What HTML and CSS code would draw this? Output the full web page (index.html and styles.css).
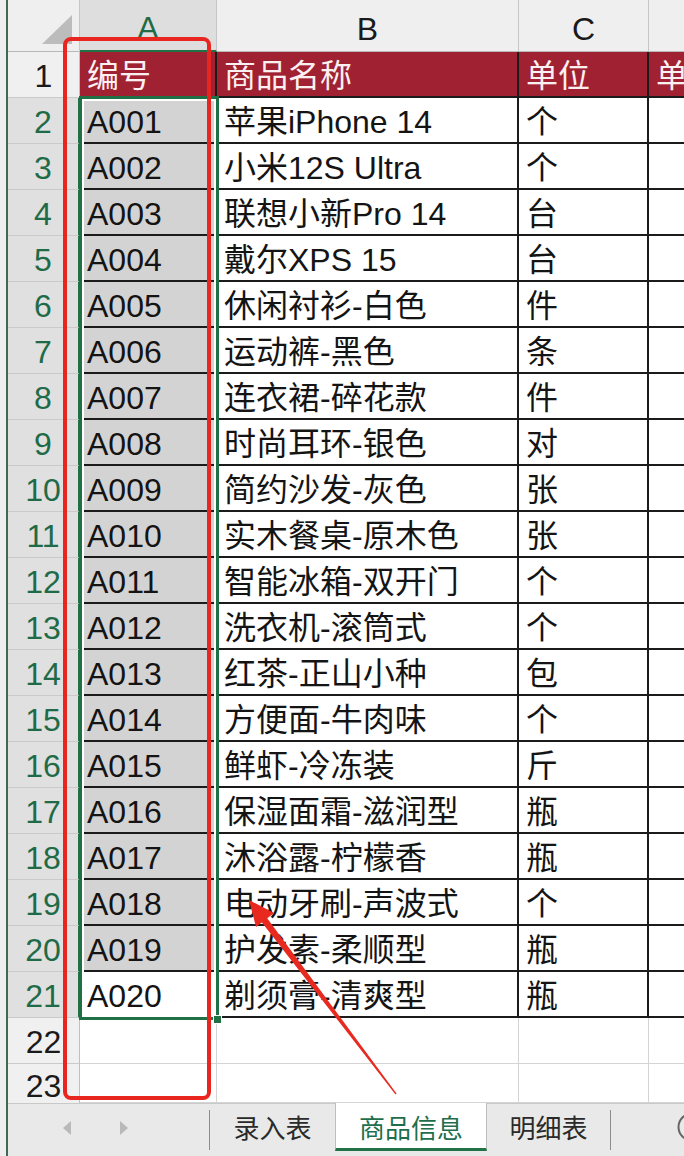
FILE: index.html
```html
<!DOCTYPE html>
<html lang="zh-CN">
<head>
<meta charset="utf-8">
<title>商品信息</title>
<link rel="stylesheet" href="styles.css">
</head>
<body>
<div class="app">
  <div class="edge"></div>
  <div class="main">
    <div class="grid">
      <div class="corner"><svg width="30" height="29" viewBox="0 0 30 29"><polygon points="30,0 30,29 0,29" fill="#bcbcbc"/></svg></div>
      <div class="ch sel">A</div>
      <div class="ch">B</div>
      <div class="ch">C</div>
      <div class="ch"></div>

      <div class="rh">1</div>
      <div class="c hd">编号</div><div class="c hd">商品名称</div><div class="c hd">单位</div><div class="c hd">单价</div>

      <div class="rh sel">2</div><div class="c g">A001</div><div class="c">苹果iPhone 14</div><div class="c">个</div><div class="c"></div>
      <div class="rh sel">3</div><div class="c g">A002</div><div class="c">小米12S Ultra</div><div class="c">个</div><div class="c"></div>
      <div class="rh sel">4</div><div class="c g">A003</div><div class="c">联想小新Pro 14</div><div class="c">台</div><div class="c"></div>
      <div class="rh sel">5</div><div class="c g">A004</div><div class="c">戴尔XPS 15</div><div class="c">台</div><div class="c"></div>
      <div class="rh sel">6</div><div class="c g">A005</div><div class="c">休闲衬衫-白色</div><div class="c">件</div><div class="c"></div>
      <div class="rh sel">7</div><div class="c g">A006</div><div class="c">运动裤-黑色</div><div class="c">条</div><div class="c"></div>
      <div class="rh sel">8</div><div class="c g">A007</div><div class="c">连衣裙-碎花款</div><div class="c">件</div><div class="c"></div>
      <div class="rh sel">9</div><div class="c g">A008</div><div class="c">时尚耳环-银色</div><div class="c">对</div><div class="c"></div>
      <div class="rh sel">10</div><div class="c g">A009</div><div class="c">简约沙发-灰色</div><div class="c">张</div><div class="c"></div>
      <div class="rh sel">11</div><div class="c g">A010</div><div class="c">实木餐桌-原木色</div><div class="c">张</div><div class="c"></div>
      <div class="rh sel">12</div><div class="c g">A011</div><div class="c">智能冰箱-双开门</div><div class="c">个</div><div class="c"></div>
      <div class="rh sel">13</div><div class="c g">A012</div><div class="c">洗衣机-滚筒式</div><div class="c">个</div><div class="c"></div>
      <div class="rh sel">14</div><div class="c g">A013</div><div class="c">红茶-正山小种</div><div class="c">包</div><div class="c"></div>
      <div class="rh sel">15</div><div class="c g">A014</div><div class="c">方便面-牛肉味</div><div class="c">个</div><div class="c"></div>
      <div class="rh sel">16</div><div class="c g">A015</div><div class="c">鲜虾-冷冻装</div><div class="c">斤</div><div class="c"></div>
      <div class="rh sel">17</div><div class="c g">A016</div><div class="c">保湿面霜-滋润型</div><div class="c">瓶</div><div class="c"></div>
      <div class="rh sel">18</div><div class="c g">A017</div><div class="c">沐浴露-柠檬香</div><div class="c">瓶</div><div class="c"></div>
      <div class="rh sel">19</div><div class="c g">A018</div><div class="c">电动牙刷-声波式</div><div class="c">个</div><div class="c"></div>
      <div class="rh sel">20</div><div class="c g">A019</div><div class="c">护发素-柔顺型</div><div class="c">瓶</div><div class="c"></div>
      <div class="rh sel">21</div><div class="c">A020</div><div class="c">剃须膏-清爽型</div><div class="c">瓶</div><div class="c"></div>

      <div class="rh">22</div><div class="e"></div><div class="e"></div><div class="e"></div><div class="e"></div>
      <div class="rh last">23</div><div class="e"></div><div class="e"></div><div class="e"></div><div class="e"></div>
    </div>

    <div class="tabbar">
      <div class="nav">
        <svg width="8" height="14" viewBox="0 0 8 14"><polygon points="8,0 8,14 0,7" fill="#b9b9b9"/></svg>
        <svg width="8" height="14" viewBox="0 0 8 14"><polygon points="0,0 0,14 8,7" fill="#b9b9b9"/></svg>
      </div>
      <div class="sep"></div>
      <div class="tab t1">录入表</div>
      <div class="tab active">商品信息</div>
      <div class="tab t3">明细表</div>
      <div class="sep"></div>
      <svg class="add" width="30" height="30" viewBox="0 0 30 30"><circle cx="15" cy="15" r="13.5" fill="none" stroke="#666" stroke-width="2"/><path d="M15 8v14M8 15h14" stroke="#666" stroke-width="2"/></svg>
    </div>
  </div>

  <div class="selbox"></div>
  <div class="handle"></div>
  <div class="redbox"></div>
  <svg class="arrow" width="684" height="1156" viewBox="0 0 684 1156">
    <polygon points="259.2,919.1 264.8,914.9 396.5,1093.6 395.5,1094.4" fill="#e8291f"/>
    <polygon points="249,900 256,927 274,913" fill="#e8291f"/>
  </svg>
</div>
</body>
</html>
```

FILE: styles.css
```css
* { box-sizing: border-box; margin: 0; padding: 0; }
body {
  margin: 0;
  background: #fff;
  font-family: "Liberation Sans", "Noto Sans CJK SC", sans-serif;
}
.app {
  position: relative;
  width: 684px;
  height: 1156px;
  overflow: hidden;
  display: flex;
  background: #fff;
}
.edge {
  width: 8px;
  flex: none;
  background: #eeeeee;
  border-right: 2px solid #3d6a52;
}
.main {
  flex: 1;
  min-width: 0;
  display: flex;
  flex-direction: column;
}
.grid {
  display: grid;
  grid-template-columns: 72px 137px 302px 130px 130px;
  grid-template-rows: 52px repeat(22, 46px) 39px;
  width: 771px;
  font-size: 32px;
  line-height: 32px;
  color: #141414;
}
.corner {
  background: #efefef;
  border-right: 1px solid #c6c6c6;
  border-bottom: 1px solid #b8b8b8;
  display: flex;
  justify-content: flex-end;
  align-items: flex-end;
  padding: 0 7px 7px 0;
}
.ch {
  background: #efefef;
  border-right: 1px solid #c6c6c6;
  border-bottom: 1px solid #b8b8b8;
  display: flex;
  justify-content: center;
  align-items: center;
  padding-top: 6px;
  color: #1a1a1a;
}
.ch.sel {
  background: #dedede;
  color: #1e6b45;
  border-bottom: 2px solid #217346;
}
.rh {
  background: #f0f0f0;
  border-right: 1px solid #c0c0c0;
  border-bottom: 1px solid #cacaca;
  display: flex;
  justify-content: center;
  align-items: flex-end;
  padding-bottom: 5px;
  color: #1a1a1a;
}
.rh.sel {
  background: #e0e0e0;
  color: #1f6b48;
  border-right: 2px solid #217346;
}
.rh.last {
  align-items: flex-start;
  padding-bottom: 0;
  padding-top: 6px;
  border-bottom: none;
}
.c {
  border-right: 2px solid #1b1b1b;
  border-bottom: 2px solid #1b1b1b;
  display: flex;
  align-items: flex-end;
  padding: 0 4px 4px 7px;
  white-space: nowrap;
  overflow: hidden;
}
.c.hd {
  background: #a02232;
  color: #fbf0f1;
}
.c.g { background: #d3d3d3; }
.e {
  border-right: 1px solid #d4d4d4;
  border-bottom: 1px solid #d4d4d4;
}

.tabbar {
  height: 53px;
  background: #e9e9e9;
  border-top: 1px solid #c9c9c9;
  display: flex;
  align-items: flex-start;
  font-family: "Noto Sans CJK SC", sans-serif;
}
.nav {
  width: 201px;
  height: 47px;
  flex: none;
  display: flex;
  align-items: center;
  padding-left: 55px;
  gap: 49px;
}
.sep {
  width: 1px;
  height: 40px;
  margin-top: 6px;
  background: #8c8c8c;
  flex: none;
}
.tab {
  height: 46px;
  display: flex;
  align-items: center;
  justify-content: center;
  font-size: 26px;
  line-height: 1;
  color: #2a2a2a;
  flex: none;
}
.t1 { width: 125px; }
.t3 { width: 123px; }
.tab.active {
  width: 152px;
  height: 48px;
  margin-top: -1px;
  background: #fff;
  border-left: 1px solid #bdbdbd;
  border-right: 1px solid #bdbdbd;
  border-bottom: 3px solid #217346;
  color: #1e6e4c;
  padding-top: 2px;
}
.add {
  margin-left: 66px;
  margin-top: 8px;
  flex: none;
}

.selbox {
  position: absolute;
  left: 79px;
  top: 96px;
  width: 140px;
  height: 924px;
  border: 3px solid #1f7145;
  box-shadow: inset 0 0 0 2px #fff;
}
.handle {
  position: absolute;
  left: 213px;
  top: 1015px;
  width: 9px;
  height: 9px;
  background: #1f7145;
  border: 1px solid #fff;
}
.redbox {
  position: absolute;
  left: 63px;
  top: 37px;
  width: 148px;
  height: 1063px;
  border: 4.5px solid #e8261f;
  border-radius: 8px;
}
.arrow {
  position: absolute;
  left: 0;
  top: 0;
  pointer-events: none;
}
```
